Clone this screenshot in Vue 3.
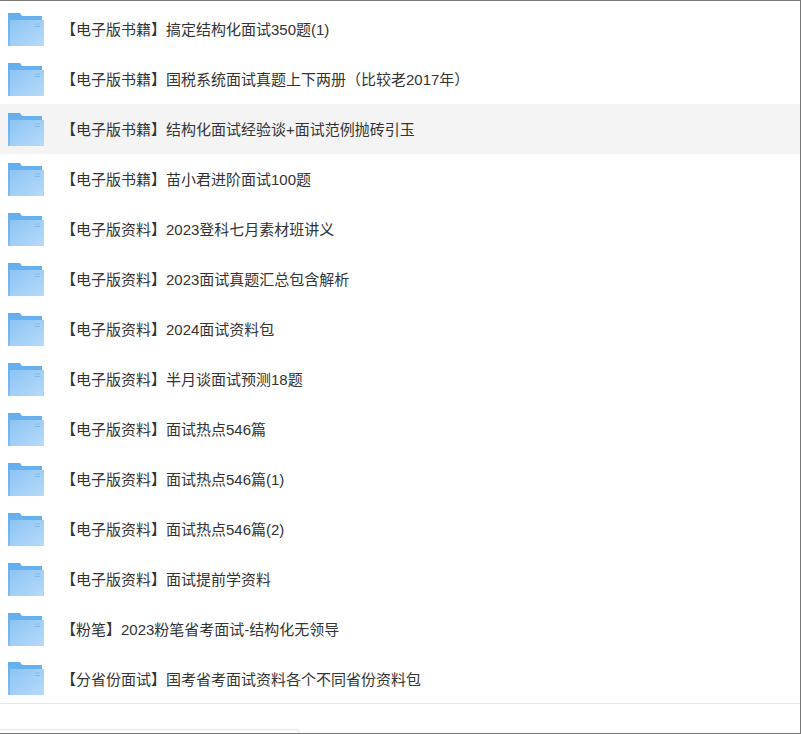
<template>
  <div class="window">
    <ul class="file-list">
      <li
        v-for="(name, i) in files"
        :key="i"
        class="file-row"
        :class="{ 'file-row--hover': i === 2 }"
      >
        <svg class="folder" width="36" height="33" viewBox="0 0 36 33" fill="none" xmlns="http://www.w3.org/2000/svg">
          <defs>
            <linearGradient id="folderBack" x1="0" y1="0" x2="0" y2="1">
              <stop offset="0" stop-color="#62aeee" />
              <stop offset="1" stop-color="#82bdf1" />
            </linearGradient>
            <linearGradient id="folderFront" x1="0" y1="0" x2="1" y2="1">
              <stop offset="0" stop-color="#8cc4f4" />
              <stop offset="1" stop-color="#b6daf9" />
            </linearGradient>
          </defs>
          <path d="M0 0H12L14 3H34V33H0Z" fill="url(#folderBack)" />
          <path d="M2 7H36V33H2Z" fill="url(#folderFront)" />
          <path d="M27 11H32M27 13.500H32" stroke="#86bbe9" stroke-width="1" />
        </svg>
        <span class="file-name">{{ name }}</span>
      </li>
    </ul>
    <div class="bottom-area">
      <div class="bottom-tab"></div>
    </div>
  </div>
</template>

<script setup>
const files = [
  '【电子版书籍】搞定结构化面试350题(1)',
  '【电子版书籍】国税系统面试真题上下两册（比较老2017年）',
  '【电子版书籍】结构化面试经验谈+面试范例抛砖引玉',
  '【电子版书籍】苗小君进阶面试100题',
  '【电子版资料】2023登科七月素材班讲义',
  '【电子版资料】2023面试真题汇总包含解析',
  '【电子版资料】2024面试资料包',
  '【电子版资料】半月谈面试预测18题',
  '【电子版资料】面试热点546篇',
  '【电子版资料】面试热点546篇(1)',
  '【电子版资料】面试热点546篇(2)',
  '【电子版资料】面试提前学资料',
  '【粉笔】2023粉笔省考面试-结构化无领导',
  '【分省份面试】国考省考面试资料各个不同省份资料包'
]
</script>

<style scoped>
.window {
  width: 801px;
  height: 734px;
  box-sizing: border-box;
  display: flex;
  flex-direction: column;
  background: #fff;
  border-top: 1px solid #777;
  border-right: 1px solid #777;
  border-bottom: 1px solid #777;
  font-family: "Liberation Sans", "Noto Sans CJK SC", sans-serif;
}

.file-list {
  list-style: none;
  margin: 0;
  padding: 3px 0 0;
  border-bottom: 1px solid #e6e6e6;
}

.file-row {
  height: 50px;
  display: flex;
  align-items: center;
  padding-left: 8px;
  color: #333;
}

.file-row:last-child {
  height: 49px;
}

.file-row--hover {
  background: #f4f4f4;
}

.folder {
  flex: none;
  margin-right: 17px;
}

.file-name {
  padding-top: 2px;
  font-size: 15px;
  line-height: 20px;
  white-space: nowrap;
}

.bottom-area {
  flex: 1;
  display: flex;
  align-items: flex-end;
}

.bottom-tab {
  width: 300px;
  height: 4px;
  box-sizing: border-box;
  border-top: 1px solid #e6e6e6;
  border-right: 1px solid #e6e6e6;
  border-top-right-radius: 5px;
}
</style>

<style>
html,
body {
  margin: 0;
  background: #fff;
}
</style>
